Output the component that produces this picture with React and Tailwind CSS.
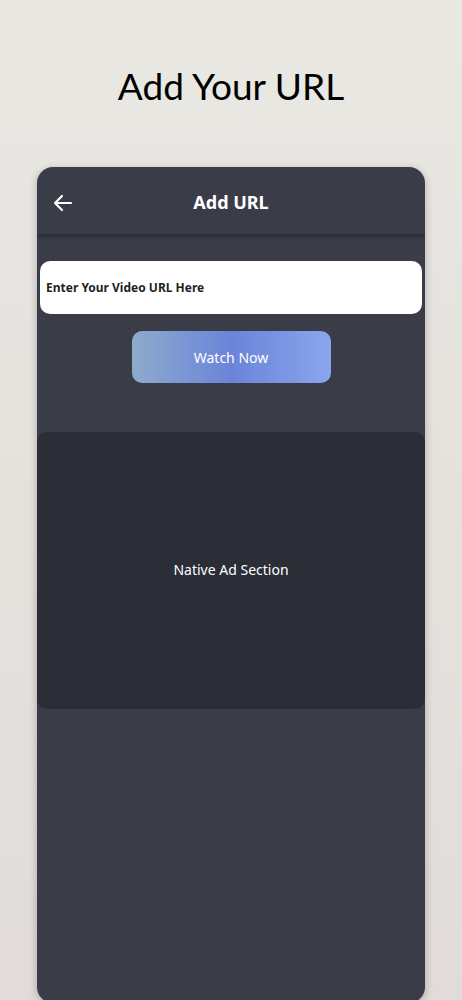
export default function App() {
  return (
    <div
      className="w-[462px] h-[1000px] overflow-hidden flex flex-col items-center bg-gradient-to-b from-[#e9e8e3] to-[#e1dcd9]"
      style={{ fontFamily: '"Noto Sans", Lato, sans-serif' }}
    >
      <h1 className="mt-[60px] h-[52px] text-[37px] leading-[52px] text-black" style={{ fontFamily: 'Lato, "Noto Sans", sans-serif' }}>
        Add Your URL
      </h1>
      <div className="mt-[55px] w-[388px] h-[836px] shrink-0 rounded-[16px] bg-[#3a3d48] shadow-[0_2px_8px_rgba(0,0,0,0.25)] flex flex-col overflow-hidden">
        <div className="relative h-[68px] flex items-center justify-center shadow-[0_2px_3px_rgba(0,0,0,0.3)] border-b border-[#30323b]">
          <svg className="absolute left-[15px] top-[26px]" width="22" height="20" viewBox="0 0 22 20" fill="none" stroke="white" strokeWidth="2.2" strokeLinecap="round" strokeLinejoin="round">
            <path d="M19 10H3M10 3L3 10L10 17" />
          </svg>
          <span className="text-white text-[18px] font-bold mt-[3px]">Add URL</span>
        </div>
        <div className="px-[3px] pt-[26px]">
          <div className="h-[53px] rounded-[10px] bg-white flex items-center px-[6px]">
            <span className="text-[12px] font-bold text-[#1f1f1f]">Enter Your Video URL Here</span>
          </div>
        </div>
        <div className="flex justify-center mt-[17px]">
          <div className="w-[199px] h-[52px] rounded-[10px] bg-gradient-to-r from-[#8eaacb] via-[#6b84d9] to-[#89a6ed] flex items-center justify-center">
            <span className="text-white text-[14px]">Watch Now</span>
          </div>
        </div>
        <div className="mt-[49px] h-[277px] rounded-[10px] bg-[#2b2d37] flex items-center justify-center">
          <span className="text-white text-[14px] mb-[3px]">Native Ad Section</span>
        </div>
      </div>
    </div>
  );
}
